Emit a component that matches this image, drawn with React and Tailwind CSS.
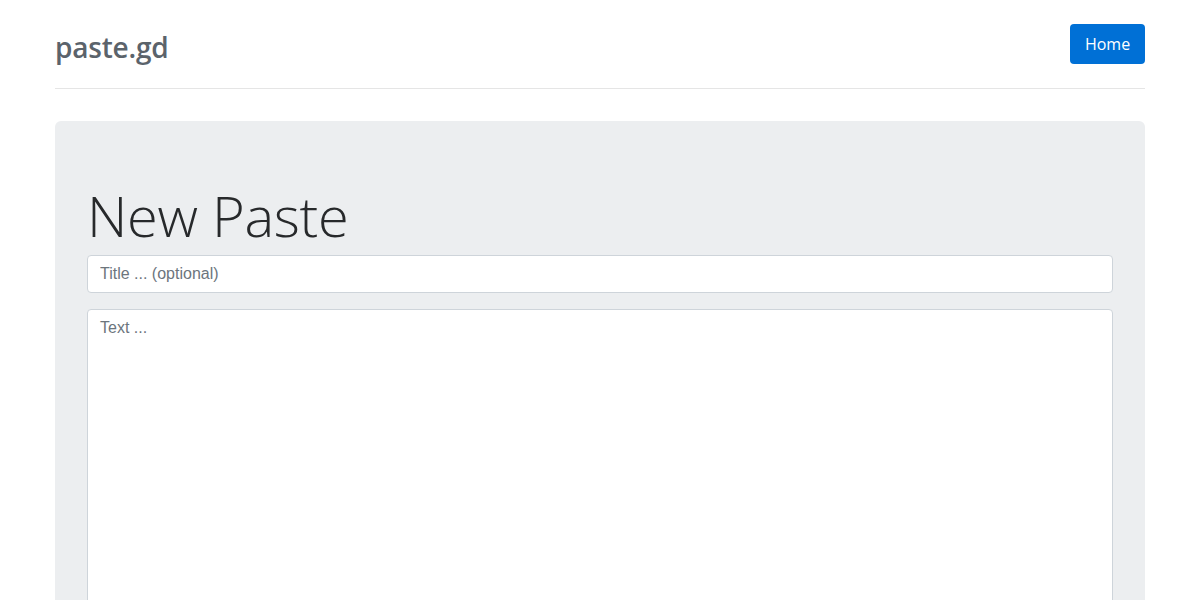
export default function App() {
  return (
    <div className="min-h-screen bg-white font-['Open_Sans',sans-serif]">
      <div className="mx-[55px]">
        <header className="flex items-start justify-between border-b border-[#e5e5e5] pt-6 pb-6">
          <a href="#" className="mt-[6px] text-[28px] font-semibold leading-[34px] tracking-[-0.2px] text-[#5b636b]">
            paste.gd
          </a>
          <button
            type="button"
            className="h-10 w-[75px] rounded bg-[#0070d6] text-[16px] text-white"
          >
            Home
          </button>
        </header>

        <main className="mt-8 rounded-md bg-[#eceef0] px-8 pt-[59px] pb-16">
          <h1 className="mb-[4px] text-[56px] font-light leading-[71px] tracking-[-0.3px] text-[#27292b]">
            New Paste
          </h1>
          <input
            type="text"
            placeholder="Title ... (optional)"
            className="mb-4 block h-[38px] w-full rounded border border-[#ced4da] bg-white px-3 font-['Liberation_Sans',Arial,sans-serif] text-[16px] text-[#495057] placeholder:text-[#6c757d] outline-none"
          />
          <textarea
            placeholder="Text ..."
            className="block h-[400px] w-full resize-none rounded border border-[#ced4da] bg-white px-3 py-[6px] font-['Liberation_Sans',Arial,sans-serif] text-[16px] leading-6 text-[#495057] placeholder:text-[#6c757d] outline-none"
          />
        </main>
      </div>
    </div>
  );
}
